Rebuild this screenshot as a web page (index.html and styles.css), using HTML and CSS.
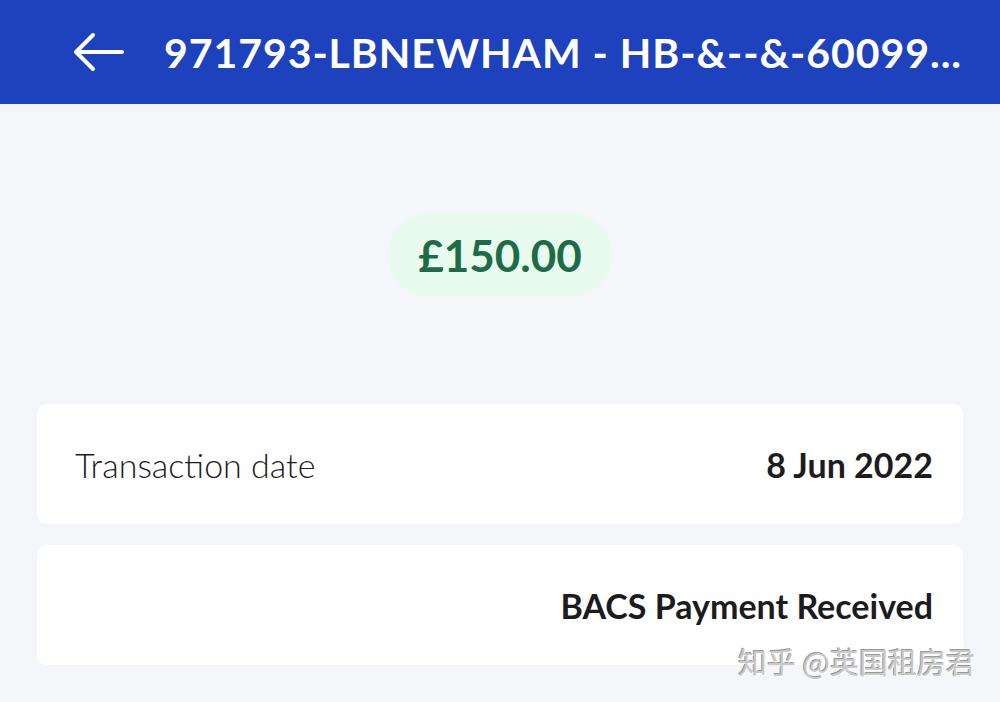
FILE: index.html
```html
<!DOCTYPE html>
<html lang="en">
<head>
    <meta charset="UTF-8">
    <meta name="viewport" content="width=device-width, initial-scale=1.0">
    <title>Transaction</title>
    <link rel="stylesheet" href="styles.css">
</head>
<body>
<header class="topbar">
    <button class="back" aria-label="Back">
        <svg width="52" height="40" viewBox="0 0 52 40">
            <path d="M50 20H4M21 3L4 20l17 17" fill="none" stroke="#fff" stroke-width="4" stroke-linecap="round" stroke-linejoin="round"/>
        </svg>
    </button>
    <h1 class="title">971793-LBNEWHAM - HB-&amp;--&amp;-60099...</h1>
</header>

<main class="content">
    <div class="amount-wrap">
        <div class="amount">£150.00</div>
    </div>

    <div class="card">
        <span class="label">Transaction date</span>
        <span class="value">8 Jun 2022</span>
    </div>
    <div class="card">
        <span class="label"></span>
        <span class="value">BACS Payment Received</span>
    </div>
</main>

<div class="watermark">知乎 @英国租房君</div>
</body>
</html>
```

FILE: styles.css
```css
body {
    margin: 0;
    background-color: #f4f6fa;
    font-family: Lato, "Open Sans", sans-serif;
    color: #1c1c1e;
    height: 702px;
    overflow: hidden;
}

.topbar {
    background-color: #1e41bd;
    height: 104px;
    display: flex;
    align-items: center;
    padding: 0 30px 0 72px;
    box-sizing: border-box;
}

.back {
    background: none;
    border: none;
    padding: 0;
    margin-right: 40px;
    display: flex;
    cursor: pointer;
}

.title {
    margin: 0;
    color: #fff;
    font-size: 41px;
    font-weight: 700;
    letter-spacing: 0.95px;
    white-space: nowrap;
}

.content {
    padding: 0 37px;
}

.amount-wrap {
    display: flex;
    justify-content: center;
    padding: 109px 0 107px;
}

.amount {
    background-color: #e8fbee;
    color: #1d6b47;
    font-size: 44px;
    font-weight: 700;
    width: 224px;
    height: 84px;
    border-radius: 42px;
    display: flex;
    align-items: center;
    justify-content: center;
}

.card {
    background-color: #fff;
    border-radius: 10px;
    height: 120px;
    margin-bottom: 21px;
    display: flex;
    align-items: center;
    justify-content: space-between;
    padding: 0 30px 0 38px;
    font-size: 34px;
}

.label {
    font-weight: 300;
}

.value {
    font-weight: 700;
}

.watermark {
    position: absolute;
    right: 25px;
    top: 640px;
    font-family: "Noto Sans CJK SC", sans-serif;
    font-size: 29px;
    color: #c8c8c8;
    text-shadow: 1px 1px 0 #fff, -1px -1px 0 #9a9a9a;
}
```
